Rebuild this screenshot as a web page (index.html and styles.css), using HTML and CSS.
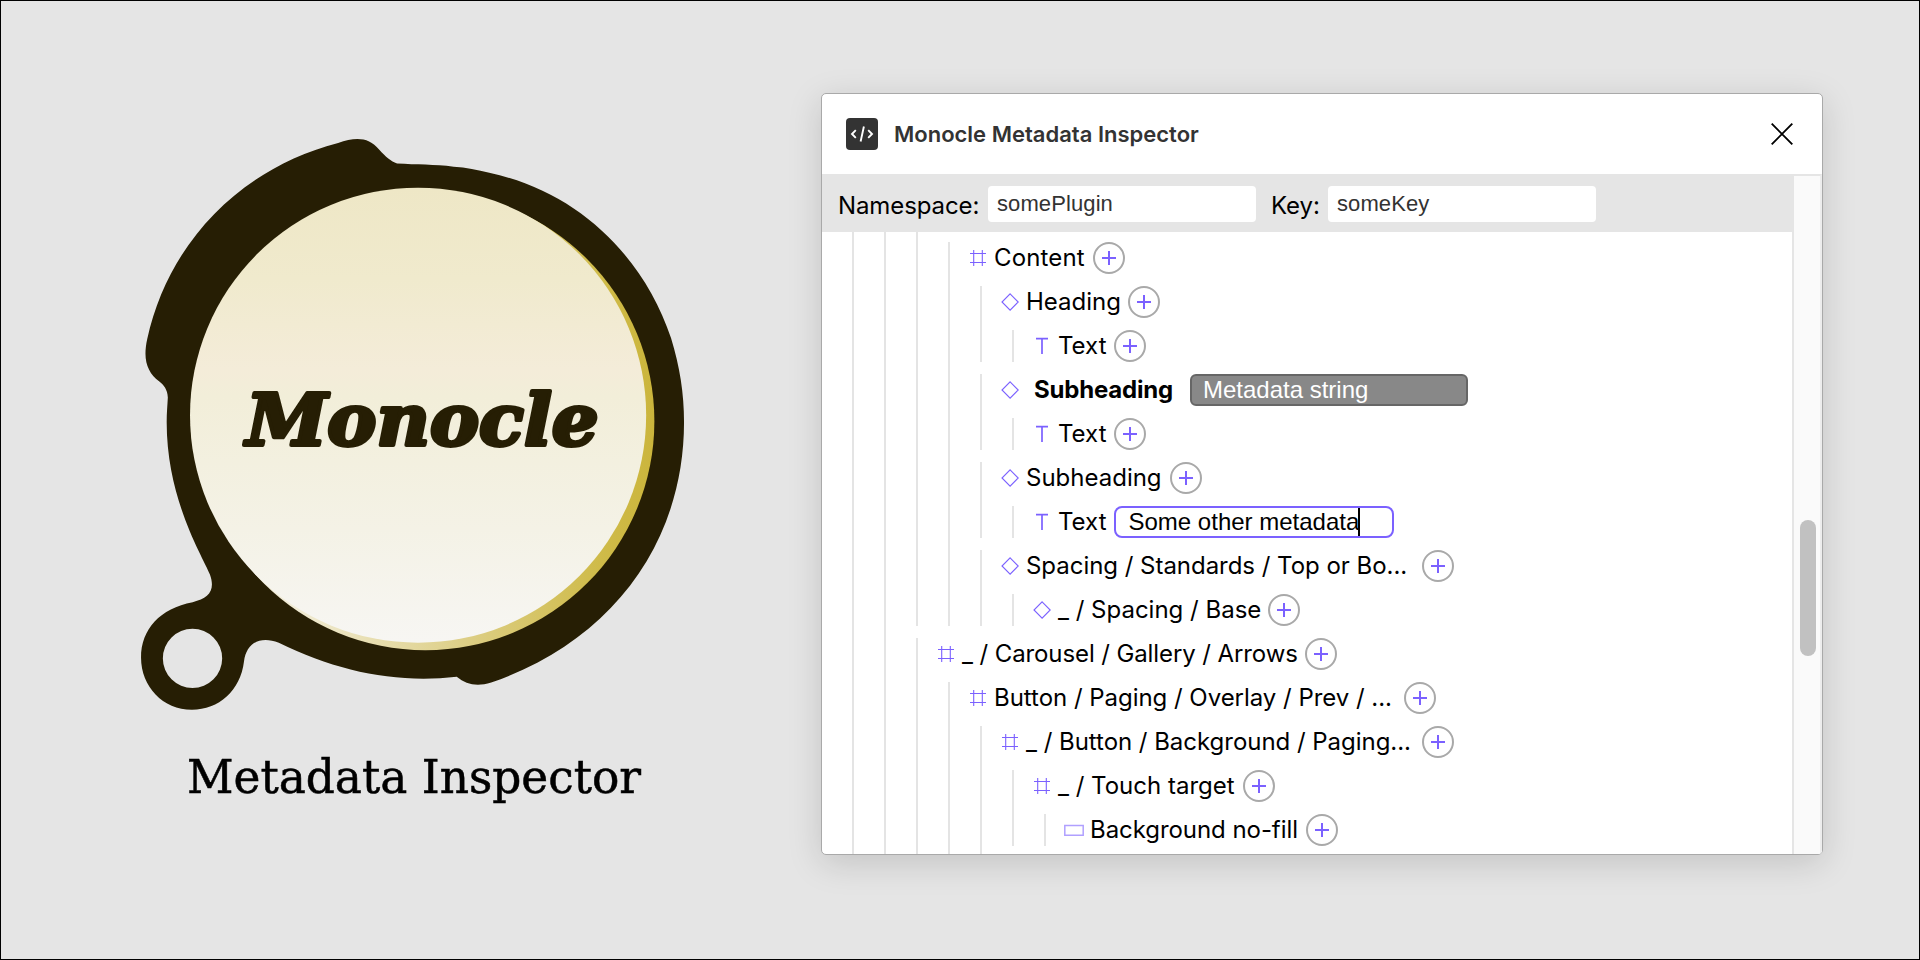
FILE: index.html
```html
<!DOCTYPE html>
<html lang="en">
<head>
<meta charset="utf-8">
<title>Monocle Metadata Inspector</title>
<link rel="stylesheet" href="styles.css">
</head>
<body>
<svg class="sprite" aria-hidden="true">
  <symbol id="frame" viewBox="0 0 18 18"><path d="M1 4.5H17M1 13.5H17M4.7 1V17M13.3 1V17"/></symbol>
  <symbol id="component" viewBox="0 0 18 18"><path d="M9.1 .9L17.2 9L9.1 17.1L1 9Z"/></symbol>
  <symbol id="text" viewBox="0 0 18 18"><path stroke-width="1.7" d="M3 1.6H15M9 1.6V17"/></symbol>
  <symbol id="rect" viewBox="0 0 20 18"><path stroke-width="1.5" opacity=".6" d="M.8 4.4H19.2V14.2H.8Z"/></symbol>
  <symbol id="plus" viewBox="0 0 14 14"><path stroke-width="2" d="M0 7H14M7 0V14"/></symbol>
</svg>
<main class="stage">
  <section class="brand">
    <svg class="logo" viewBox="0 0 1568 1568">
      <defs>
        <linearGradient id="glass" x1="0" y1="0" x2="0" y2="1">
          <stop offset="0" stop-color="#eee7c6"/>
          <stop offset=".2" stop-color="#f0eacd"/>
          <stop offset=".4" stop-color="#f4ecd9"/>
          <stop offset=".46" stop-color="#f2eed9"/>
          <stop offset=".75" stop-color="#f4f2e6"/>
          <stop offset="1" stop-color="#f7f6f3"/>
        </linearGradient>
        <linearGradient id="gold" gradientUnits="userSpaceOnUse" x1="450" y1="0" x2="1397" y2="0">
          <stop offset="0" stop-color="#f1ecd6"/>
          <stop offset=".5" stop-color="#dccd82"/>
          <stop offset=".85" stop-color="#cfbb49"/>
          <stop offset="1" stop-color="#cbb53c"/>
        </linearGradient>
      </defs>
      <path class="ink" fill-rule="evenodd" d="M724 114C775 117 822 116 872 122C905 124 934 130 965 138C1200 188 1370 360 1440 570C1463 645 1474 715 1474 790C1474 1104 1285 1362 970 1470C932 1482 905 1475 880 1455C720 1473 568 1441 415 1366C366 1347 330 1367 324 1415C315 1491 258 1541 188 1541C112 1541 55 1480 55 1405C55 1330 105 1276 190 1260C232 1250 250 1230 235 1188C218 1143 122 995 122 790C122 765 124 745 125 725C124 705 115 693 102 683C72 659 59 628 71 573C126 322 312 127 570 60C615 44 650 44 677 77C695 97 708 107 724 114ZM112 1407a77.500 77.500 0 1 0 155 0a77.500 77.500 0 1 0 -155 0Z"/>
      <circle cx="798" cy="787" r="598.500" fill="url(#gold)"/>
      <ellipse cx="779" cy="771.500" rx="596" ry="594.500" fill="url(#glass)"/>
      <text class="wordmark" x="329" y="850" textLength="922" lengthAdjust="spacingAndGlyphs">Monocle</text>
    </svg>
    <svg class="caption" viewBox="0 0 480 70">
      <text x="7" y="45" textLength="454" lengthAdjust="spacingAndGlyphs">Metadata Inspector</text>
    </svg>
  </section>

  <section class="window">
    <header class="titlebar">
      <svg class="app-icon" viewBox="0 0 32 32"><path d="M9.800 12.200L6 16L9.800 19.800M17.900 8.500L14.600 23.500M22.200 12.200L26 16L22.200 19.800"/></svg>
      <h1 class="title">Monocle Metadata Inspector</h1>
      <svg class="close" viewBox="0 0 22 22"><path d="M.7 .7L21.300 21.300M21.300 .7L.7 21.300"/></svg>
    </header>
    <div class="body">
      <div class="pane">
        <div class="toolbar">
          <span class="field-label">Namespace:</span><span class="field">somePlugin</span>
          <span class="field-label key">Key:</span><span class="field">someKey</span>
        </div>
        <div class="tree">
          <div class="node"><div class="node"><div class="node first">
            <div class="node">
              <div class="row"><svg class="icon"><use href="#frame"/></svg><span class="label loose">Content</span><span class="add"><svg><use href="#plus"/></svg></span></div>
              <div class="node">
                <div class="row"><svg class="icon"><use href="#component"/></svg><span class="label">Heading</span><span class="add"><svg><use href="#plus"/></svg></span></div>
                <div class="node"><div class="row"><svg class="icon"><use href="#text"/></svg><span class="label">Text</span><span class="add"><svg><use href="#plus"/></svg></span></div></div>
              </div>
              <div class="node">
                <div class="row"><svg class="icon"><use href="#component"/></svg><span class="label strong">Subheading</span><span class="badge">Metadata string</span></div>
                <div class="node"><div class="row"><svg class="icon"><use href="#text"/></svg><span class="label">Text</span><span class="add"><svg><use href="#plus"/></svg></span></div></div>
              </div>
              <div class="node">
                <div class="row"><svg class="icon"><use href="#component"/></svg><span class="label roomy">Subheading</span><span class="add"><svg><use href="#plus"/></svg></span></div>
                <div class="node"><div class="row"><svg class="icon"><use href="#text"/></svg><span class="label">Text</span><span class="editor">Some other metadata<i class="caret"></i></span></div></div>
              </div>
              <div class="node">
                <div class="row"><svg class="icon"><use href="#component"/></svg><span class="label cut">Spacing / Standards / Top or Bo...</span><span class="add"><svg><use href="#plus"/></svg></span></div>
                <div class="node"><div class="row"><svg class="icon"><use href="#component"/></svg><span class="label">_ / Spacing / Base</span><span class="add"><svg><use href="#plus"/></svg></span></div></div>
              </div>
            </div>
          </div>
          <div class="node">
            <div class="row"><svg class="icon"><use href="#frame"/></svg><span class="label tight">_ / Carousel / Gallery / Arrows</span><span class="add"><svg><use href="#plus"/></svg></span></div>
            <div class="node">
              <div class="row"><svg class="icon"><use href="#frame"/></svg><span class="label cut wide">Button / Paging / Overlay / Prev / ...</span><span class="add"><svg><use href="#plus"/></svg></span></div>
              <div class="node last">
                <div class="row"><svg class="icon"><use href="#frame"/></svg><span class="label cut">_ / Button / Background / Paging...</span><span class="add"><svg><use href="#plus"/></svg></span></div>
                <div class="node">
                  <div class="row"><svg class="icon"><use href="#frame"/></svg><span class="label roomy">_ / Touch target</span><span class="add"><svg><use href="#plus"/></svg></span></div>
                  <div class="node"><div class="row"><svg class="icon shape"><use href="#rect"/></svg><span class="label snug">Background no-fill</span><span class="add"><svg><use href="#plus"/></svg></span></div></div>
                </div>
              </div>
            </div>
          </div></div></div>
        </div>
      </div>
      <div class="scrollbar"><div class="thumb"></div></div>
    </div>
  </section>
</main>
</body>
</html>
```

FILE: styles.css
```css
* { box-sizing: border-box; }
body { margin: 0; font-family: Inter, "Noto Sans", sans-serif; color: #000; }
.sprite { display: none; }
.stage {
  width: 1920px; height: 960px; border: 1px solid #000; background: #e5e5e5;
  display: flex; align-items: flex-start; overflow: hidden;
}

.brand { width: 820px; padding: 119px 0 0 119px; display: flex; flex-direction: column; }
.logo { width: 600px; height: 600px; display: block; }
.ink { fill: #261e04; }
.wordmark {
  font: italic bold 184px "DejaVu Serif", serif;
  fill: #261e04; stroke: #261e04; stroke-width: 10px; stroke-linejoin: round;
}
.caption { width: 480px; height: 70px; margin: 28px 0 0 60px; display: block; }
.caption text {
  font: 46.500px "DejaVu Serif Condensed", "DejaVu Serif", serif;
  stroke: #000; stroke-width: .5px;
}

.window {
  width: 1002px; height: 762px; margin-top: 92px; flex: none;
  border: 1px solid #a9a9a9; border-radius: 5px; background: #fff; overflow: hidden;
  box-shadow: 0 8px 34px rgba(0, 0, 0, .15);
  display: flex; flex-direction: column;
}
.titlebar { height: 80px; padding: 0 29px 0 24px; display: flex; align-items: center; flex: none; }
.app-icon { width: 32px; height: 32px; border-radius: 4px; background: #333; }
.app-icon path { fill: none; stroke: #fff; stroke-width: 1.900; }
.title { margin: 0 auto 0 16px; font-size: 22px; font-weight: 600; line-height: 32px; color: #333; white-space: nowrap; }
.close { width: 22px; height: 22px; }
.close path { stroke: #000; stroke-width: 1.900; fill: none; }

.body { flex: 1; min-height: 0; display: flex; }
.pane { width: 970px; display: flex; flex-direction: column; min-height: 0; }
.toolbar { height: 58px; padding: 0 16px; background: #e5e5e5; display: flex; align-items: center; flex: none; }
.field-label { width: 150px; font-size: 24px; line-height: 32px; padding-top: 6px; letter-spacing: -.1px; white-space: nowrap; }
.field-label.key { width: 57px; margin-left: 15px; }
.field {
  width: 268px; height: 36px; margin-top: 2px; padding-left: 9px; border-radius: 4px; background: #fff;
  font: 22px/36px "Liberation Sans", sans-serif; letter-spacing: .1px; color: #333;
}
.scrollbar {
  width: 30px; padding: 344px 0 0 6px; background: #fafafa;
  border: solid #e5e5e5; border-width: 2px 2px 0 2px; border-right-color: #ededed;
}
.thumb { width: 16px; height: 136px; border-radius: 8px; background: #c1c1c1; }

.tree { flex: 1; min-height: 0; overflow: hidden; }
.node {
  margin-left: 30px; border-left: 2px solid #e4e4e4;
  display: flex; flex-direction: column; gap: 12px;
}
.node.first { padding-top: 10px; }
.node.last { padding-bottom: 8px; }
.row { height: 32px; padding-left: 19px; display: flex; align-items: center; white-space: nowrap; }
.icon { width: 18px; height: 18px; flex: none; margin-right: 7px; fill: none; stroke: #7b61ff; stroke-width: 1.100; }
.icon.shape { width: 20px; margin: 0 6px 0 -1px; }
.label { font-size: 24px; line-height: 32px; margin-right: 7px; }
.label.loose { letter-spacing: .15px; margin-right: 8px; }
.label.roomy { margin-right: 8px; }
.label.tight { letter-spacing: -.1px; }
.label.snug { letter-spacing: -.06px; margin-right: 8px; }
.label.cut { width: 396px; margin-right: 0; letter-spacing: -.03px; }
.label.cut.wide { width: 410px; }
.label.strong { font-weight: 700; letter-spacing: -.2px; margin: 0 17px 0 8px; }
.add {
  width: 32px; height: 32px; border: 2px solid #a9a9a9; border-radius: 50%; flex: none;
  display: flex; align-items: center; justify-content: center;
}
.add svg { width: 14px; height: 14px; stroke: #7b61ff; }
.badge, .editor { height: 32px; font: 24px/28px "Liberation Sans", sans-serif; }
.badge { width: 278px; padding-left: 11px; border: 2px solid #666; border-radius: 6px; background: #888; color: #fff; }
.editor {
  width: 280px; padding-left: 13px; border: 2px solid #7b61ff; border-radius: 8px;
  background: #fff; display: flex;
}
.caret { width: 2px; height: 28px; background: #000; margin-left: -1px; }
```
